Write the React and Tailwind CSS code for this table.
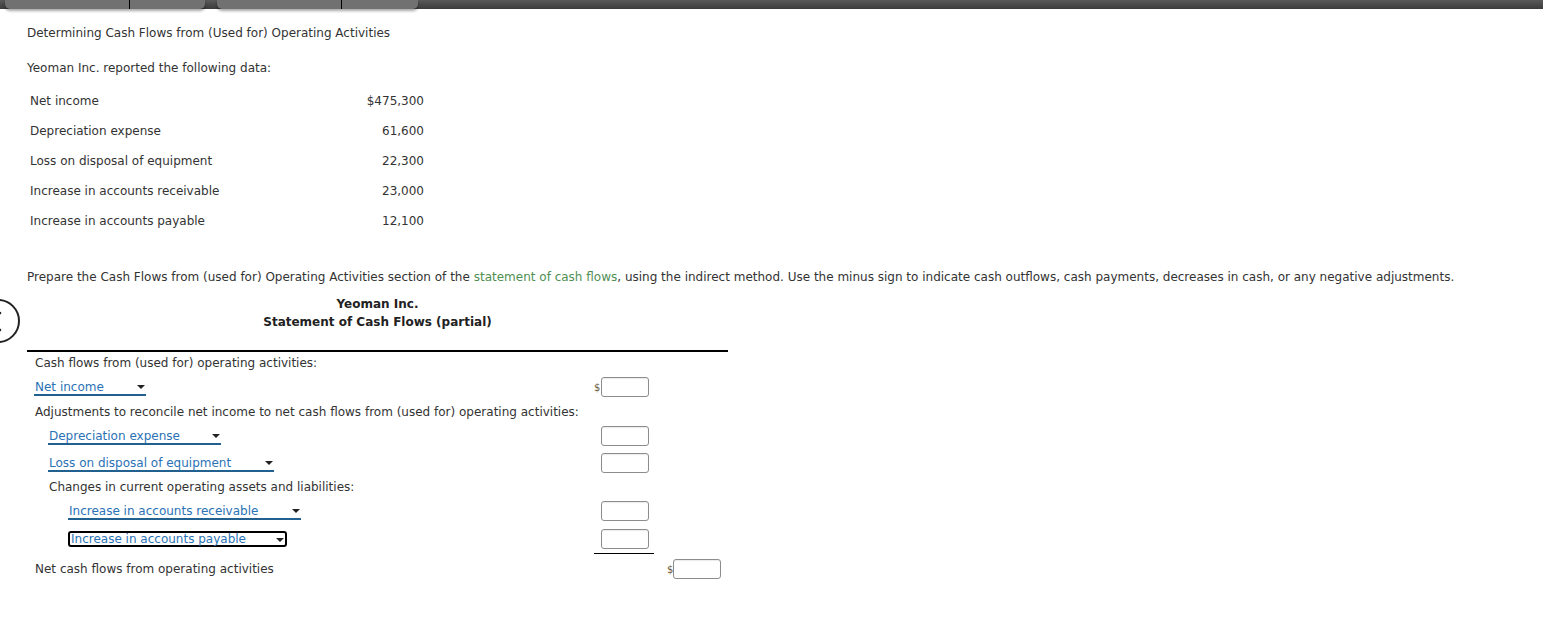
import React from 'react'

const DATA = [
  ['Net income', '$475,300'],
  ['Depreciation expense', '61,600'],
  ['Loss on disposal of equipment', '22,300'],
  ['Increase in accounts receivable', '23,000'],
  ['Increase in accounts payable', '12,100'],
]

function Dropdown({ label, width, focused }) {
  return (
    <span
      className={
        'relative inline-flex h-[16px] items-center pl-[1px] leading-[14px] text-[#2a72b5] ' +
        (focused
          ? 'rounded-[3px] border-2 border-black'
          : 'border-b-2 border-[#22618f]')
      }
      style={{ width }}
    >
      {label}
      <span className="absolute right-[1px] top-[5px] h-0 w-0 border-x-[4px] border-t-[4px] border-x-transparent border-t-[#222]" />
    </span>
  )
}

function Box() {
  return <span className="inline-block h-[20px] w-[48px] rounded-[3px] border-[1.5px] border-[#8c8c8c] bg-white shadow-[inset_0_1px_1px_rgba(0,0,0,0.08)]" />
}

function Row({ h, indent = 0, children, input, dollar, total }) {
  return (
    <div className="flex items-center" style={{ height: h }}>
      <div className="flex-1" style={{ paddingLeft: indent }}>{children}</div>
      <div className={'flex h-full w-[60px] items-center ' + (total ? 'border-b border-black' : '')}>
        <span className="w-[7px] text-[10px] text-[#6b5a3a]">{dollar ? '$' : ''}</span>
        {input === 'left' && <Box />}
      </div>
      <div className="flex w-[74px] items-center pl-[13px]">
        <span className="w-[6px] text-[10px] text-[#6b5a3a]">{input === 'right' ? '$' : ''}</span>
        {input === 'right' && <Box />}
      </div>
    </div>
  )
}

export default function App() {
  return (
    <div className="relative min-h-[634px] bg-white text-[12px] text-[#333] [font-family:'DejaVu_Sans',Verdana,sans-serif]">
      {/* top tab strip */}
      <div className="flex h-[9px] bg-gradient-to-b from-[#5a5a5a] to-[#3c3c3c]">
        <div className="ml-[5px] flex w-[200px] rounded-b-[5px] bg-[#717171] shadow-[0_2px_3px_rgba(0,0,0,0.35)]">
          <div className="w-[125px] border-r border-black" />
        </div>
        <div className="ml-[12px] flex w-[201px] rounded-b-[5px] bg-[#717171] shadow-[0_2px_3px_rgba(0,0,0,0.35)]">
          <div className="w-[125px] border-r border-black" />
        </div>
      </div>

      {/* partially hidden nav circle */}
      <div className="absolute left-[-24px] top-[299px] h-[44px] w-[44px] rounded-full border-[2.5px] border-[#222]">
        <svg className="absolute left-0 top-0" width="40" height="40" viewBox="0 0 40 40">
          <polyline points="22,12 14,20.5 22,29" fill="none" stroke="#222" strokeWidth="2.5" strokeLinecap="round" strokeLinejoin="round" />
        </svg>
      </div>

      <div className="pl-[27px]">
        <div className="mt-[15px] leading-[18px]">Determining Cash Flows from (Used for) Operating Activities</div>
        <div className="mt-[17px] leading-[18px]">Yeoman Inc. reported the following data:</div>

        <div className="ml-[3px] mt-[9px] w-[394px]">
          {DATA.map(([label, value]) => (
            <div key={label} className="flex h-[30px] items-center justify-between">
              <span>{label}</span>
              <span>{value}</span>
            </div>
          ))}
        </div>

        <div className="mt-[32px] leading-[18px]">
          Prepare the Cash Flows from (used for) Operating Activities section of the{' '}
          <span className="text-[#4f8f52]">statement of cash flows</span>, using the indirect method. Use the minus sign to indicate cash outflows, cash payments, decreases in cash, or any negative adjustments.
        </div>

        <div className="mt-[9px] w-[701px]">
          <div className="text-center font-bold leading-[18px] text-[#222]">
            <div>Yeoman Inc.</div>
            <div>Statement of Cash Flows (partial)</div>
          </div>

          <div className="mt-[19px] border-t-2 border-black pl-[8px] pt-[2px]">
            <Row h={18}>Cash flows from (used for) operating activities:</Row>
            <Row h={30} input="left" dollar>
              <span className="-ml-[1px]"><Dropdown label="Net income" width={112} /></span>
            </Row>
            <Row h={20}>Adjustments to reconcile net income to net cash flows from (used for) operating activities:</Row>
            <Row h={28} indent={13} input="left">
              <Dropdown label="Depreciation expense" width={173} />
            </Row>
            <Row h={26} indent={13} input="left">
              <Dropdown label="Loss on disposal of equipment" width={226} />
            </Row>
            <Row h={22} indent={14}>Changes in current operating assets and liabilities:</Row>
            <Row h={26} indent={33} input="left">
              <Dropdown label="Increase in accounts receivable" width={233} />
            </Row>
            <Row h={30} indent={33} input="left" total>
              <Dropdown label="Increase in accounts payable" width={219} focused />
            </Row>
            <Row h={30} input="right">Net cash flows from operating activities</Row>
          </div>
        </div>
      </div>
    </div>
  )
}
